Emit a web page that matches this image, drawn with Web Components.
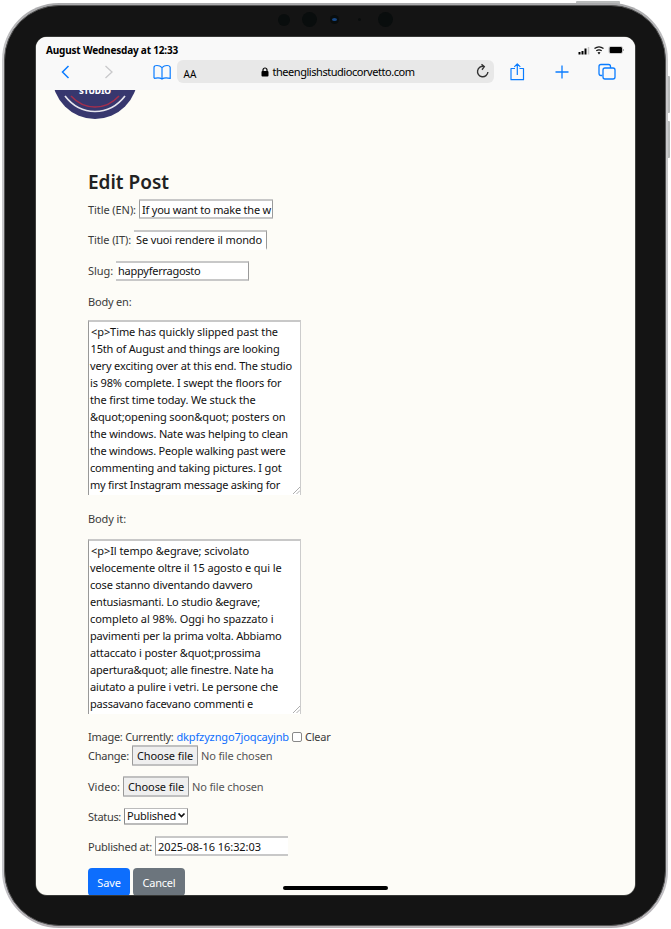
<!DOCTYPE html>
<html lang="en"><head><meta charset="utf-8"><title>Edit Post</title>
<style>
html,body{margin:0;width:671px;height:929px;overflow:hidden;background:#fff;font-family:"Noto Sans","Open Sans",sans-serif}
</style></head><body>
<tablet-frame>
  <status-bar slot="screen"></status-bar>
  <browser-bar slot="screen"></browser-bar>
  <edit-page slot="screen"></edit-page>
</tablet-frame>
<script>
class Base extends HTMLElement{
  constructor(){super();this.attachShadow({mode:'open'});}
  connectedCallback(){this.shadowRoot.innerHTML=this.render();this.ready&&this.ready();}
}
/* One line of text spread to a given width through letter spacing. */
customElements.define('fit-text',class extends Base{
  render(){return `<style>:host{display:block;flex:none;white-space:pre}span{display:inline-block}</style><span><slot></slot></span>`}
  ready(){
    const w=+this.getAttribute('w'),s=this.shadowRoot.querySelector('span');
    this.style.width=w+'px';
    const n=this.textContent.length;
    s.style.letterSpacing=((w-s.getBoundingClientRect().width)/n).toFixed(3)+'px';
  }
});
customElements.define('tablet-frame',class extends Base{
  render(){return `<style>
  :host{display:block;position:relative;width:671px;height:929px}
  .body{position:absolute;left:2px;top:3px;width:666px;height:925px;border-radius:57px;box-sizing:border-box;padding:2px 2px 2px 2px;background:linear-gradient(#a9a9ab,#c9c9cb 6%,#c6c6ca 94%,#b4b0b4)}
  .bezel{height:100%;box-sizing:border-box;border:1px solid #555;border-radius:55px;background:#141414;padding:31px 30px 30px 30.500px}
  .screen{height:858px;border-radius:11px;overflow:hidden;background:#fdfcf7;display:flex;flex-direction:column;box-shadow:0 0 0 .6px #5b5d59}
  .btn{position:absolute;background:#b9bbbb;border-radius:1px}
  .cam{position:absolute;border-radius:50%;background:#090d0d}
  .home{position:absolute;left:283px;top:886px;width:105px;height:4px;border-radius:2px;background:#000}
  </style>
  <div class="btn" style="left:576px;top:1px;width:44px;height:4px"></div>
  <div class="btn" style="left:667px;top:76px;width:3px;height:37px"></div>
  <div class="btn" style="left:667px;top:121px;width:3px;height:37px"></div>
  <div class="body"><div class="bezel"><div class="screen"><slot name="screen"></slot></div></div></div>
  <div class="cam" style="left:278px;top:14px;width:12px;height:12px"></div>
  <div class="cam" style="left:302px;top:12px;width:15px;height:15px"></div>
  <div class="cam" style="left:330px;top:15px;width:9px;height:9px"></div>
  <div class="cam" style="left:332px;top:18px;width:5px;height:3px;background:#174887"></div>
  <div class="cam" style="left:358px;top:18px;width:3px;height:3px"></div>
  <div class="cam" style="left:378px;top:12px;width:15px;height:15px"></div>
  <div class="home"></div>`}
});
customElements.define('status-bar',class extends Base{
  render(){return `<style>:host{display:flex;flex:none;height:23px;background:#f9f9f9;align-items:center;padding:3px 11px 0 10.5px;box-sizing:border-box;justify-content:space-between;font-size:10px;font-weight:700;color:#000}
  svg{display:block}</style>
  <fit-text w="132">August Wednesday at 12:33</fit-text>
  <svg width="46" height="12" viewBox="0 0 46 12"><path d="M1.500 8v2.500M4.500 7v3.500M7.500 4.500v6" stroke="#000" stroke-width="2"/><path d="M10.500 3v7.500" stroke="#c9c9c9" stroke-width="1.500"/>
  <g fill="none" stroke="#111" stroke-width="1.300"><path d="M16.500 4.500q4.500-3.400 9 0M18.300 6.800q2.700-2 5.400 0"/></g><path d="M19.500 8.500q1.500-1 3 0L21 10.500z" fill="#111"/>
  <rect x="31.500" y="3" width="12.500" height="6" rx="1"/><rect x="31" y="2.500" width="13.500" height="7" rx="1.500" fill="none" stroke="#aaa" stroke-width=".6"/><path d="M45.300 5v2" stroke="#999"/></svg>`}
});
customElements.define('browser-bar',class extends Base{
  render(){return `<style>
  :host{display:grid;flex:none;height:30px;background:#f9f9f9;grid-template-columns:18px 23px 22px 23px 22px 33px 317px 13px 20px 25px 20px 25px 20px;align-items:start;color:#000}
  svg{display:block;fill:none;stroke:#0a7cff;stroke-width:1.300}
  .url{height:23px;background:#e8e8e8;border-radius:6px;display:flex;align-items:center;box-sizing:border-box;padding:0 4px 0 7px;font-size:11px}
  .aa{font-size:10px;padding-top:5px}.lock{margin:0 4px 0 64px}.url .re{margin-left:auto}
  </style>
  <i></i>
  <svg width="23" height="23"><path d="M14.500 6 8.500 12l6 6" stroke-width="1.500"/></svg><i></i>
  <svg width="23" height="23" style="stroke:#c9c9cb"><path d="M6.500 6l6.500 6L6.500 18"/></svg><i></i>
  <svg width="33" height="23"><path d="M10 18.300V7.500Q10 5.500 13 5.500T18 7.700Q20 5.500 23 5.500T26.200 7.500V18.300Q20.500 17 18 19Q15.500 17 10 18.300M18 7.700V19" stroke-width="1.200"/></svg>
  <div class="url"><fit-text class="aa" w="13">AA</fit-text>
   <svg class="lock" width="8" height="10" style="stroke:none"><rect x=".5" y="4" width="7" height="5.500" rx="1" fill="#000"/><path d="M2 5V3a2 2 0 0 1 4 0v2" stroke="#000" stroke-width="1.200"/></svg>
   <fit-text w="142">theenglishstudiocorvetto.com</fit-text>
   <svg class="re" width="15" height="17" style="stroke:#333;stroke-width:1.400"><path d="M9 3.500A5.200 5.200 0 1 0 12.900 9M6.500 1.200 9.300 3.700 7 6.700"/></svg></div>
  <i></i>
  <svg width="20" height="23" stroke-linejoin="round"><path d="M8 8.500H4V19.700H16.500V8.500H12.500M10.300 15V4M7.300 6.800 10.300 3.800l3 3" stroke-width="1.200"/></svg><i></i>
  <svg width="20" height="23"><path d="M10 5.500V18.500M3.500 12H16.500"/></svg><i></i>
  <svg width="20" height="23"><path d="M5.300 15.500H4Q2 15.500 2 13.500V6.500Q2 4.500 4 4.500H11.500Q13.500 4.500 13.500 6.500V8"/><rect x="6" y="8" width="12" height="11" rx="2"/></svg>`}
});
customElements.define('studio-logo',class extends Base{
  render(){return `<style>:host{display:block;width:82px;height:30px;overflow:hidden;margin-left:18.500px}svg{display:block}</style>
  <svg width="82" height="30" viewBox="54 90 82 30"><circle cx="95" cy="76.500" r="42.500" fill="#37376e"/>
  <path d="M65 96Q77 111.500 95 111.500T125 96" fill="none" stroke="#e6e5ed" stroke-width="1.700"/><path d="M71 96Q81 107 95 107T119 96" fill="none" stroke="#a32f4d" stroke-width="1.500"/>
  <text x="79" y="93.500" font-family="Noto Sans" font-size="8.500" font-weight="800" textLength="32" fill="#fff">STUDIO</text></svg>`}
});
customElements.define('text-box',class extends Base{
  render(){return `<style>:host{display:flex;align-items:center;box-sizing:border-box;width:134px;height:20px;background:#fff;border:0 solid #9a9a9a;border-top:2px solid #c8c8c8;border-bottom:2px solid #c8c8c8;padding-left:3px;overflow:hidden;color:#111}
  :host([l]){border-left-width:1px}:host([r]){border-right-width:1px}:host([nb]){border-bottom-color:#fff}</style><slot></slot>`}
});
customElements.define('text-block',class extends Base{
  render(){return `<style>:host{display:block;box-sizing:border-box;position:relative;width:213px;height:175px;background:#fff;border:1px solid #999;border-right-color:#ccc;border-top:2px solid #c8c8c8;border-bottom:0;padding:1px 0 0 1px;overflow:hidden;line-height:17.030px;color:#111}
  svg{position:absolute;right:0;bottom:1px}</style><slot></slot>
  <svg width="7" height="7"><path d="M0 7 7 0M3.500 7 7 3.500" stroke="#999" stroke-width=".8"/></svg>`}
});
customElements.define('file-picker',class extends Base{
  render(){return `<style>:host{display:flex;align-items:center;color:#555}
  .b{box-sizing:border-box;width:66px;height:21px;border:1px solid #999;border-top:2px solid #c0c0c0;border-bottom:2px solid #c0c0c0;background:#efefef;color:#111;display:flex;align-items:center;justify-content:center;margin-right:3px;border-radius:1px}</style>
  <div class="b"><fit-text w="56">Choose file</fit-text></div><fit-text w="71.500">No file chosen</fit-text>`}
});
customElements.define('push-button',class extends Base{
  render(){return `<style>:host{display:flex;align-items:center;justify-content:center;height:28px;border-radius:4px;background:var(--bg);color:#fff}</style><slot></slot>`}
});
customElements.define('edit-page',class extends Base{
  render(){
  const lines=a=>a.map(([t,w,x])=>`<fit-text w="${w}" style="margin-left:${x||0}px">${t.replace(/&/g,'&amp;').replace(/</g,'&lt;')}</fit-text>`).join('');
  const en=[['<p>Time has quickly slipped past the',187,1],['15th of August and things are looking',189,.5],['very exciting over at this end. The studio',202],['is 98% complete. I swept the floors for',191.5],['the first time today. We stuck the',165.5],['&quot;opening soon&quot; posters on',195.5],['the windows. Nate was helping to clean',198],['the windows. People walking past were',195.5],['commenting and taking pictures. I got',191.5],['my first Instagram message asking for',190]];
  const it=[['<p>Il tempo &egrave; scivolato',158,1],['velocemente oltre il 15 agosto e qui le',191.5],['cose stanno diventando davvero',162.5],['entusiasmanti. Lo studio &egrave;',170],['completo al 98%. Oggi ho spazzato i',183.5],['pavimenti per la prima volta. Abbiamo',191.5],['attaccato i poster &quot;prossima',170.5],['apertura&quot; alle finestre. Nate ha',183.5],['aiutato a pulire i vetri. Le persone che',188],['passavano facevano commenti e',163]];
  return `<style>
  :host{display:block;flex:1;font-size:11px;color:#3a3a3a}
  form{margin:48px 0 0 52.500px;display:grid;grid-template-rows:28px 26px 2px 31px 31px 30px 4px 175px 44px 175px 13px 19px 19px 6px 30px 30px 30px 7px 28px;align-content:start}
  .r{display:flex;align-items:center}
  h2{margin:0;font-size:19px;font-weight:600;color:#222;line-height:28px}
  .link{color:#0d6efd;margin:0 3px 0 3px}
  .cb{box-sizing:border-box;width:10px;height:10px;border:1px solid #888;border-radius:2px;background:#fff;margin-right:3px}
  .sel{box-sizing:border-box;width:64px;height:17px;border:1px solid #888;border-top-color:#bbb;border-bottom:2px solid #bbb;border-radius:1px;background:#fff;color:#111;display:flex;align-items:center;padding-left:2px;margin-left:3px}
  </style>
  <studio-logo></studio-logo>
  <form>
  <h2><fit-text w="81">Edit Post</fit-text></h2>
  <div class="r"><fit-text w="48">Title (EN):</fit-text><text-box l r style="margin-left:3px;padding-left:2px;padding-right:2px;border-radius:1px"><fit-text w="129">If you want to make the w</fit-text></text-box></div><i></i>
  <div class="r"><fit-text w="43">Title (IT):</fit-text><text-box r nb style="margin-left:3px;width:133px;padding-left:2px"><fit-text w="126">Se vuoi rendere il mondo</fit-text></text-box></div>
  <div class="r"><fit-text w="25">Slug:</fit-text><text-box r style="margin-left:3px;width:133px;padding-left:2px"><fit-text w="82.500">happyferragosto</fit-text></text-box></div>
  <div class="r"><fit-text w="43.500">Body en:</fit-text></div><i></i>
  <text-block>${lines(en)}</text-block>
  <div class="r" style="padding-top:2px"><fit-text w="38">Body it:</fit-text></div>
  <text-block>${lines(it)}</text-block><i></i>
  <div class="r"><fit-text w="85.500">Image: Currently:</fit-text><fit-text class="link" w="112.500">dkpfzyzngo7joqcayjnb</fit-text><div class="cb"></div><fit-text w="25.500">Clear</fit-text></div>
  <div class="r"><fit-text w="41">Change:</fit-text><file-picker style="margin-left:3px"></file-picker></div><i></i>
  <div class="r"><fit-text w="32">Video:</fit-text><file-picker style="margin-left:3px"></file-picker></div>
  <div class="r"><fit-text w="33">Status:</fit-text><div class="sel"><fit-text w="49">Published</fit-text><svg width="9" height="7" style="margin-left:1px"><path d="M1.500 1.500 4.500 4.500 7.500 1.500" fill="none" stroke="#111" stroke-width="1.700"/></svg></div></div>
  <div class="r"><fit-text w="64">Published at:</fit-text><text-box l style="margin-left:3px;width:133px;padding-left:2px"><fit-text w="103">2025-08-16 16:32:03</fit-text></text-box></div><i></i>
  <div class="r"><push-button style="--bg:#0d6efd;width:42px"><fit-text w="23.500">Save</fit-text></push-button><push-button style="--bg:#6c757d;width:52px;margin-left:3px"><fit-text w="33">Cancel</fit-text></push-button></div>
  </form>`}
});
</script></body></html>
